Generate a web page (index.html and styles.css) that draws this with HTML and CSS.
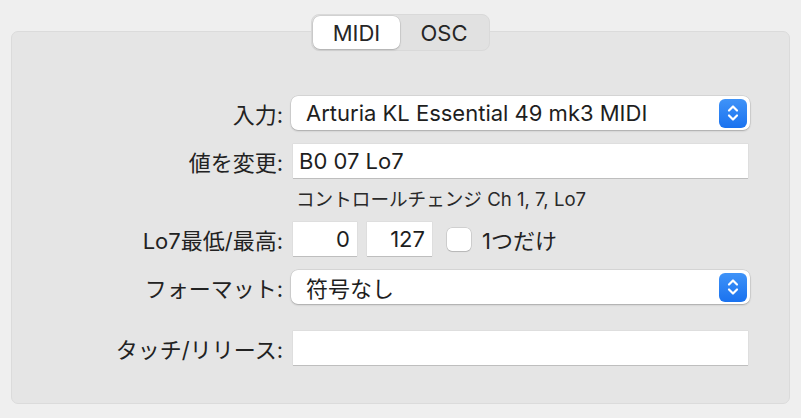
FILE: index.html
```html
<!DOCTYPE html>
<html lang="ja">
<head>
    <meta charset="UTF-8">
    <title>MIDI</title>
    <link rel="stylesheet" href="styles.css">
</head>
<body>
    <div class="tabs">
        <div class="tab active">MIDI</div>
        <div class="tab">OSC</div>
    </div>

    <div class="panel">
        <div class="row">
            <div class="label">入力:</div>
            <div class="popup">
                <span class="popup-text">Arturia KL Essential 49 mk3 MIDI</span>
                <span class="stepper">
                    <svg width="14" height="20" viewBox="0 0 14 20">
                        <path d="M3 7.5 L7 3.5 L11 7.5" />
                        <path d="M3 12.5 L7 16.5 L11 12.5" />
                    </svg>
                </span>
            </div>
        </div>

        <div class="row">
            <div class="label">値を変更:</div>
            <div class="field">B0 07 Lo7</div>
        </div>

        <div class="hint">コントロールチェンジ Ch 1, 7, Lo7</div>

        <div class="row">
            <div class="label">Lo7最低/最高:</div>
            <div class="range">
                <div class="field num">0</div>
                <div class="field num">127</div>
                <span class="check"></span>
                <span class="check-label">1つだけ</span>
            </div>
        </div>

        <div class="row">
            <div class="label">フォーマット:</div>
            <div class="popup">
                <span class="popup-text">符号なし</span>
                <span class="stepper">
                    <svg width="14" height="20" viewBox="0 0 14 20">
                        <path d="M3 7.5 L7 3.5 L11 7.5" />
                        <path d="M3 12.5 L7 16.5 L11 12.5" />
                    </svg>
                </span>
            </div>
        </div>

        <div class="row last">
            <div class="label">タッチ/リリース:</div>
            <div class="field"></div>
        </div>
    </div>
</body>
</html>
```

FILE: styles.css
```css
body {
    margin: 0;
    padding: 14px 0 0 0;
    background-color: #efefef;
    font-family: Inter, "Noto Sans CJK JP", sans-serif;
    font-size: 22px;
    color: #222;
    height: 418px;
    box-sizing: border-box;
    overflow: hidden;
}

/* segmented control */
.tabs {
    position: relative;
    z-index: 1;
    display: flex;
    width: 179px;
    height: 37px;
    margin: 0 auto -20px auto;
    padding: 1px;
    box-sizing: border-box;
    background-color: #e1e1e1;
    border: 1px solid #d9d9d9;
    border-radius: 8px;
}

.tab {
    flex: 1;
    display: flex;
    align-items: center;
    justify-content: center;
    font-size: 22px;
    color: #262626;
}

.tab.active {
    flex: 0 0 87px;
    background-color: #fff;
    border-radius: 7px;
    box-shadow: 0 0 0 0.5px rgba(0, 0, 0, 0.12), 0 1px 2px rgba(0, 0, 0, 0.18);
}

/* main box */
.panel {
    margin-left: 11px;
    width: 779px;
    height: 373px;
    box-sizing: border-box;
    padding: 64px 39px 0 0;
    background-color: #e5e5e5;
    border: 1px solid #dbdbdb;
    border-radius: 7px;
}

.row {
    display: flex;
    align-items: center;
    height: 34px;
    margin-bottom: 14px;
}

.label {
    flex: 0 0 271px;
    text-align: right;
    margin-right: 8px;
    white-space: nowrap;
}

.popup {
    flex: 1;
    height: 34px;
    display: flex;
    align-items: center;
    justify-content: space-between;
    padding: 0 3px 0 15px;
    box-sizing: border-box;
    background-color: #fff;
    border-radius: 7px;
    box-shadow: 0 0 0 0.5px rgba(0, 0, 0, 0.12), 0 1px 2px rgba(0, 0, 0, 0.22);
}

.popup-text {
    color: #1e1e1e;
}

.stepper {
    width: 28px;
    height: 29px;
    border-radius: 6px;
    background: linear-gradient(#3f93f8, #1a72ef);
    display: flex;
    align-items: center;
    justify-content: center;
}

.stepper svg path {
    fill: none;
    stroke: #fff;
    stroke-width: 2.2;
    stroke-linecap: round;
    stroke-linejoin: round;
}

.field {
    flex: 1;
    height: 34px;
    margin: 0 2px;
    padding: 0 6px;
    box-sizing: border-box;
    display: flex;
    align-items: center;
    background-color: #fff;
    color: #1e1e1e;
    box-shadow: 0 1px 0 rgba(0, 0, 0, 0.14), 0 0 0 0.5px rgba(0, 0, 0, 0.06);
}

.hint {
    margin: -4px 0 12px 284px;
    font-size: 18.6px;
    line-height: 22px;
    color: #2a2a2a;
}

.range {
    flex: 1;
    display: flex;
    align-items: center;
    margin-left: 2px;
}

.field.num {
    flex: 0 0 64px;
    margin: 0 10px 0 0;
    padding: 0 7px 0 0;
    justify-content: flex-end;
}

.field.num + .field.num {
    flex-basis: 65px;
    margin-right: 15px;
}

.check {
    width: 24px;
    height: 23px;
    box-sizing: border-box;
    background-color: #fff;
    border-radius: 5px;
    box-shadow: 0 0 0 0.5px rgba(0, 0, 0, 0.18), 0 1px 1px rgba(0, 0, 0, 0.12);
    margin-right: 11px;
}

.check-label {
    white-space: nowrap;
}

.row.last {
    margin-top: 27px;
}
```
